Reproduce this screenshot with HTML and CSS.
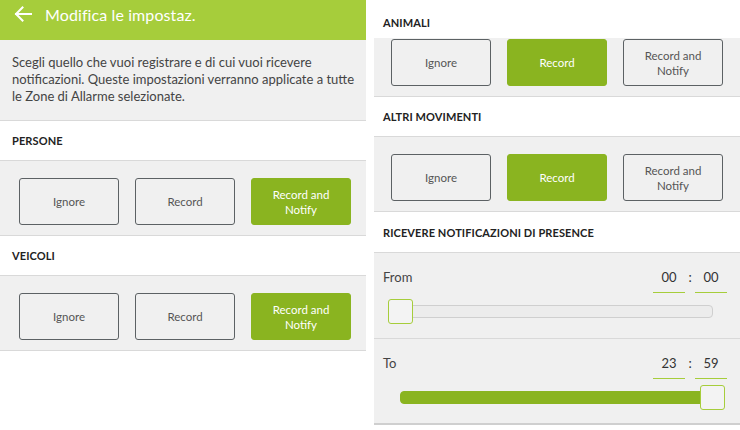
FILE: index.html
```html
<!DOCTYPE html>
<html lang="it">
<head>
<meta charset="utf-8">
<title>Modifica le impostaz.</title>
<link rel="stylesheet" href="styles.css">
</head>
<body>
<div class="screens">
  <section class="panel">
    <header class="appbar">
      <svg class="back" width="18" height="16" viewBox="0 0 18 16"><path d="M17 8H2M8.5 1.5L2 8l6.5 6.5" fill="none" stroke="#fff" stroke-width="2" stroke-linecap="square"/></svg>
      <h1 class="title">Modifica le impostaz.</h1>
    </header>
    <p class="intro">Scegli quello che vuoi registrare e di cui vuoi ricevere notificazioni. Queste impostazioni verranno applicate a tutte le Zone di Allarme selezionate.</p>
    <h2 class="label">PERSONE</h2>
    <div class="choices">
      <button class="opt">Ignore</button>
      <button class="opt">Record</button>
      <button class="opt on">Record and<br>Notify</button>
    </div>
    <h2 class="label">VEICOLI</h2>
    <div class="choices">
      <button class="opt">Ignore</button>
      <button class="opt">Record</button>
      <button class="opt on">Record and<br>Notify</button>
    </div>
  </section>

  <section class="panel">
    <h2 class="label first">ANIMALI</h2>
    <div class="choices cut">
      <button class="opt">Ignore</button>
      <button class="opt on">Record</button>
      <button class="opt">Record and<br>Notify</button>
    </div>
    <h2 class="label">ALTRI MOVIMENTI</h2>
    <div class="choices">
      <button class="opt">Ignore</button>
      <button class="opt on">Record</button>
      <button class="opt">Record and<br>Notify</button>
    </div>
    <h2 class="label tall">RICEVERE NOTIFICAZIONI DI PRESENCE</h2>
    <div class="timeblock">
      <div class="timerow">
        <span class="tlabel">From</span>
        <span class="time"><span class="field">00</span><span class="colon">:</span><span class="field">00</span></span>
      </div>
      <div class="slider">
        <div class="track"></div>
        <div class="knob start"></div>
      </div>
    </div>
    <div class="timeblock last">
      <div class="timerow">
        <span class="tlabel">To</span>
        <span class="time"><span class="field">23</span><span class="colon">:</span><span class="field">59</span></span>
      </div>
      <div class="slider">
        <div class="track full"></div>
        <div class="knob end"></div>
      </div>
    </div>
  </section>
</div>
</body>
</html>
```
FILE: styles.css
```css
* { box-sizing: border-box; }
html, body { margin: 0; padding: 0; background: #fff; }
body {
  font-family: Lato, "Open Sans", "Liberation Sans", sans-serif;
  color: #333;
}
.screens {
  display: flex;
  gap: 8px;
  width: 740px;
  height: 430px;
  overflow: hidden;
}
.panel {
  width: 366px;
  flex: none;
  display: flex;
  flex-direction: column;
}
.appbar {
  height: 40px;
  background: #a6cd3b;
  display: flex;
  align-items: center;
  padding: 0 0 12px 14px;
  gap: 13px;
}
.back { display: block; }
.title {
  margin: 0;
  font-size: 16px;
  font-weight: 400;
  color: #fff;
  letter-spacing: 0.1px;
}
.intro {
  margin: 0;
  background: #f0f0f0;
  border-bottom: 1px solid #d9d9d9;
  height: 81px;
  padding: 14px 10px 0 12px;
  font-size: 13px;
  line-height: 17px;
  color: #444;
}
.label {
  margin: 0;
  height: 39px;
  display: flex;
  align-items: center;
  padding: 0 0 0 12px;
  font-size: 11px;
  font-weight: 700;
  color: #222;
  letter-spacing: 0.1px;
}
.label.tall { height: 40px; }
.label.first {
  height: 38px;
  padding-top: 6px;
}
.panel + .panel .label { padding-left: 9px; }
.choices {
  display: flex;
  gap: 16px;
  background: #f0f0f0;
  border-top: 1px solid #d9d9d9;
  border-bottom: 1px solid #d9d9d9;
  padding: 17px 0 10px 19px;
}
.panel + .panel .choices { padding-left: 17px; }
.choices.cut {
  border-top-color: #f0f0f0;
  padding-top: 0;
  padding-bottom: 10px;
}
.opt {
  width: 100px;
  height: 47px;
  border: 1.5px solid #5c6164;
  border-radius: 3px;
  background: #f0f0f0;
  font-family: inherit;
  font-size: 11.5px;
  line-height: 15px;
  color: #555;
  padding: 0;
}
.opt.on {
  background: #8ab420;
  border-color: #8ab420;
  color: #fff;
}
.timeblock {
  background: #f0f0f0;
  border-top: 1px solid #d9d9d9;
  padding: 15px 13px 0 9px;
  height: 86px;
}
.timeblock.last {
  height: 87px;
  border-bottom: 2px solid #cfcfcf;
}
.timerow {
  display: flex;
  justify-content: space-between;
  align-items: flex-start;
  height: 31px;
}
.tlabel {
  font-size: 13px;
  color: #444;
  line-height: 18px;
  padding-top: 0;
}
.time {
  display: flex;
  align-items: flex-start;
  font-size: 13px;
  color: #333;
  line-height: 18px;
}
.field {
  width: 32px;
  text-align: center;
  height: 25px;
  border-bottom: 1.5px solid #a6cd3b;
}
.colon {
  width: 10px;
  text-align: center;
}
.slider {
  position: relative;
  height: 25px;
  margin: 0 0 0 5px;
  width: 337px;
}
.track {
  position: absolute;
  left: 12px;
  right: 12px;
  top: 6px;
  height: 13px;
  border: 1.5px solid #cfcfcf;
  border-radius: 4px;
  background: #ececec;
}
.track.full {
  background: #8ab420;
  border-color: #8ab420;
}
.knob {
  position: absolute;
  top: 0;
  width: 25px;
  height: 25px;
  border: 1.5px solid #a6cd3b;
  border-radius: 3px;
  background: #f3f3f3;
}
.knob.start { left: 0; }
.knob.end { right: 0; }
```
